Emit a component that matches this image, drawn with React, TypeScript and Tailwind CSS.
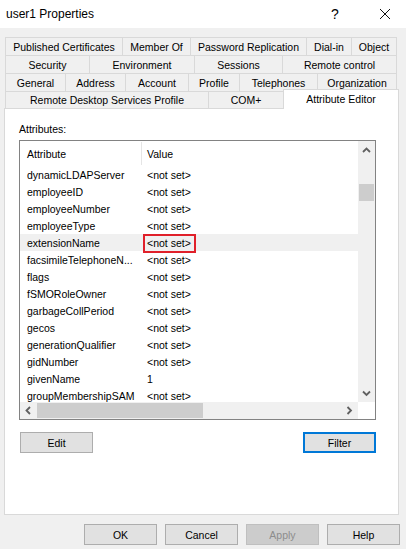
import React from "react"

const tabRows = [
	[
		{ label: "Published Certificates", w: "w-[118px]" },
		{ label: "Member Of", w: "w-[69px]" },
		{ label: "Password Replication", w: "w-[117px]" },
		{ label: "Dial-in", w: "w-[46px]" },
		{ label: "Object", w: "w-[46px]" },
	],
	[
		{ label: "Security", w: "w-[85px]" },
		{ label: "Environment", w: "w-[106px]" },
		{ label: "Sessions", w: "w-[89px]" },
		{ label: "Remote control", w: "w-[115px]" },
	],
	[
		{ label: "General", w: "w-[61px]" },
		{ label: "Address", w: "w-[61px]" },
		{ label: "Account", w: "w-[64px]" },
		{ label: "Profile", w: "w-[52px]" },
		{ label: "Telephones", w: "w-[79px]" },
		{ label: "Organization", w: "w-[80px]" },
	],
]

const attributes = [
	{ name: "dynamicLDAPServer", value: "<not set>" },
	{ name: "employeeID", value: "<not set>" },
	{ name: "employeeNumber", value: "<not set>" },
	{ name: "employeeType", value: "<not set>" },
	{ name: "extensionName", value: "<not set>", marked: true },
	{ name: "facsimileTelephoneN...", value: "<not set>" },
	{ name: "flags", value: "<not set>" },
	{ name: "fSMORoleOwner", value: "<not set>" },
	{ name: "garbageCollPeriod", value: "<not set>" },
	{ name: "gecos", value: "<not set>" },
	{ name: "generationQualifier", value: "<not set>" },
	{ name: "gidNumber", value: "<not set>" },
	{ name: "givenName", value: "1" },
	{ name: "groupMembershipSAM", value: "<not set>" },
]

const Chevron = ({ dir }: { dir: "up" | "down" | "left" | "right" }) => {
	const d = {
		up: "M1 5 L4.5 1.5 L8 5",
		down: "M1 1.5 L4.5 5 L8 1.5",
		left: "M5 1 L1.5 4.5 L5 8",
		right: "M1.5 1 L5 4.5 L1.5 8",
	}[dir]
	const vertical = dir === "up" || dir === "down"
	return (
		<svg width={vertical ? 9 : 7} height={vertical ? 7 : 9} viewBox={vertical ? "0 0 9 7" : "0 0 7 9"}>
			<path d={d} fill="none" stroke="#606060" strokeWidth="1.8" />
		</svg>
	)
}

const Button = ({ label, focused, disabled }: { label: string; focused?: boolean; disabled?: boolean }) => (
	<div
		className={`w-[73px] h-[21px] flex items-center justify-center ${
			focused
				? "border-2 border-[#0078d7] bg-[#e1e1e1]"
				: disabled
				? "border border-[#bfbfbf] bg-[#cccccc] text-[#8c8c8c]"
				: "border border-[#adadad] bg-[#e1e1e1]"
		}`}>
		{label}
	</div>
)

export default function App() {
	return (
		<div className="w-[406px] h-[549px] bg-[#f0f0f0] text-black text-[10.5px] leading-[12px] font-['Segoe_UI','Liberation_Sans',sans-serif] overflow-hidden">
			{/* title bar */}
			<div className="h-[28px] bg-white flex items-center pl-[6px]">
				<span className="text-[12px] flex-1">user1 Properties</span>
				<span className="text-[14px] w-[10px] mr-[38px]">?</span>
				<svg width="12" height="12" viewBox="0 0 12 12" className="mr-[15px]">
					<path d="M1 1 L11 11 M11 1 L1 11" stroke="#111" strokeWidth="1" />
				</svg>
			</div>

			{/* tab rows */}
			<div className="mt-[9px] ml-[5px] w-[394px]">
				{tabRows.map((row, i) => (
					<div className={`flex ${i > 0 ? "-mt-px" : ""}`} key={i}>
						{row.map((tab, j) => (
							<div
								key={j}
								className={`${tab.w} h-[19px] border border-[#d9d9d9] flex items-center justify-center whitespace-nowrap ${j > 0 ? "-ml-px" : ""}`}>
								{tab.label}
							</div>
						))}
					</div>
				))}
				<div className="flex items-end -mt-px">
					<div className="w-[204px] h-[18px] border border-[#d9d9d9] flex items-center justify-center whitespace-nowrap">
						Remote Desktop Services Profile
					</div>
					<div className="w-[76px] h-[18px] -ml-px border border-[#d9d9d9] flex items-center justify-center">
						COM+
					</div>
					<div className="relative z-10 w-[116px] h-[20px] -mt-[2px] -ml-px border border-b-0 border-[#d9d9d9] bg-white flex items-center justify-center pb-[2px] whitespace-nowrap">
						Attribute Editor
					</div>
				</div>
			</div>

			{/* page */}
			<div className="ml-[4px] -mt-px w-[395px] h-[407px] bg-white border border-[#d9d9d9] pl-[14px] pt-[14px]">
				<p>Attributes:</p>
				<div className="mt-[5px] w-[357px] h-[280px] border border-[#828282] grid grid-cols-[338px_17px] grid-rows-[261px_17px]">
					<div className="overflow-hidden">
						<div className="h-[25px] grid grid-cols-[121px_1px_1fr] items-center">
							<span className="pl-[7px]">Attribute</span>
							<span className="h-[23px] bg-[#e5e5e5]"></span>
							<span className="pl-[5px]">Value</span>
						</div>
						{attributes.map((row, i) => (
							<div
								key={i}
								className={`h-[17px] grid grid-cols-[122px_1fr] items-center whitespace-nowrap ${row.marked ? "bg-[#f0f0f0]" : ""}`}>
								<span className="pl-[7px]">{row.name}</span>
								<span className="pl-[5px] relative h-[17px] flex items-center">
									{row.value}
									{row.marked && (
										<span className="absolute left-[1px] top-0 w-[53px] h-[19px] border-2 border-[#e0202a]"></span>
									)}
								</span>
							</div>
						))}
					</div>

					{/* vertical scroll bar */}
					<div className="bg-[#f0f0f0] flex flex-col items-center">
						<div className="h-[17px] flex items-center justify-center pt-[2px]">
							<Chevron dir="up" />
						</div>
						<div className="h-[26px]"></div>
						<div className="w-[15px] h-[17px] bg-[#cdcdcd]"></div>
						<div className="flex-1"></div>
						<div className="h-[17px] flex items-center justify-center">
							<Chevron dir="down" />
						</div>
					</div>

					{/* horizontal scroll bar */}
					<div className="bg-[#f0f0f0] flex items-center">
						<div className="w-[17px] flex justify-center">
							<Chevron dir="left" />
						</div>
						<div className="w-[166px] h-[15px] bg-[#cdcdcd]"></div>
						<div className="flex-1"></div>
						<div className="w-[17px] flex justify-center">
							<Chevron dir="right" />
						</div>
					</div>
					<div className="bg-white"></div>
				</div>

				<div className="mt-[12px] w-[357px] flex justify-between pl-[1px]">
					<Button label="Edit" />
					<Button label="Filter" focused />
				</div>
			</div>

			{/* dialog buttons */}
			<div className="mt-[9px] flex justify-end gap-[8px] pr-[6px]">
				<Button label="OK" />
				<Button label="Cancel" />
				<Button label="Apply" disabled />
				<Button label="Help" />
			</div>
		</div>
	)
}
